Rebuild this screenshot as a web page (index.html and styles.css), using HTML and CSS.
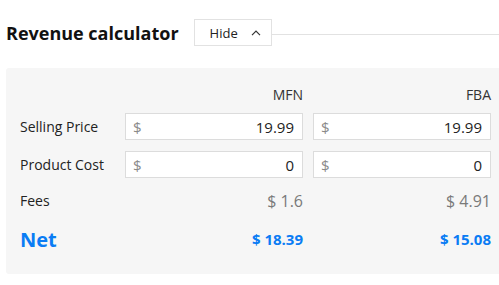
FILE: index.html
```html
<!DOCTYPE html>
<html lang="en">
<head>
    <meta charset="UTF-8">
    <meta name="viewport" content="width=device-width, initial-scale=1.0">
    <title>Revenue calculator</title>
    <link rel="stylesheet" href="styles.css">
</head>
<body>
    <div class="calc-header">
        <h2 class="calc-title">Revenue calculator</h2>
        <button class="toggle-btn">
            <span>Hide</span>
            <svg width="10" height="6" viewBox="0 0 10 6"><path d="M1 5.2 L5 1.2 L9 5.2" fill="none" stroke="#333" stroke-width="1.2"/></svg>
        </button>
        <div class="header-line"></div>
    </div>

    <div class="calc-panel">
        <div class="calc-row head-row">
            <div></div>
            <div class="col-head">MFN</div>
            <div class="col-head">FBA</div>
        </div>
        <div class="calc-row input-row">
            <div class="row-label">Selling Price</div>
            <div class="money-input"><span class="cur">$</span><span class="val">19.99</span></div>
            <div class="money-input"><span class="cur">$</span><span class="val">19.99</span></div>
        </div>
        <div class="calc-row input-row second">
            <div class="row-label">Product Cost</div>
            <div class="money-input"><span class="cur">$</span><span class="val">0</span></div>
            <div class="money-input"><span class="cur">$</span><span class="val">0</span></div>
        </div>
        <div class="calc-row fees-row">
            <div class="row-label">Fees</div>
            <div class="fee">$ 1.6</div>
            <div class="fee">$ 4.91</div>
        </div>
        <div class="calc-row net-row">
            <div class="net-label">Net</div>
            <div class="net">$ 18.39</div>
            <div class="net">$ 15.08</div>
        </div>
    </div>
</body>
</html>
```

FILE: styles.css
```css
body {
    margin: 0;
    overflow: hidden;
    font-family: "Open Sans", Arial, sans-serif;
    color: #222;
    background: white;
}

.calc-header {
    display: flex;
    align-items: center;
    padding: 19px 0 0 6px;
    height: 27px;
}

.calc-title {
    margin: 0;
    font-size: 18px;
    font-weight: 700;
    color: #111;
}

.toggle-btn {
    display: flex;
    align-items: center;
    gap: 13px;
    width: 78px;
    height: 27px;
    margin-left: 15px;
    padding: 0 0 0 15px;
    background: white;
    border: 1px solid #e2e2e2;
    font-family: "Open Sans", Arial, sans-serif;
    font-size: 13px;
    color: #222;
    cursor: pointer;
}

.header-line {
    flex: 1;
    border-top: 1px solid #e2e2e2;
    margin-top: 3px;
}

.calc-panel {
    margin: 22px -8px 0 6px;
    padding: 16px 22px 21px 14px;
    background: #f6f6f6;
    border-radius: 3px;
}

.calc-row {
    display: grid;
    grid-template-columns: 95px 178px 178px;
    column-gap: 10px;
    align-items: center;
}

.head-row {
    height: 20px;
}

.col-head {
    text-align: right;
    font-size: 14px;
    color: #333;
}

.row-label {
    font-size: 14px;
    color: #222;
}

.input-row {
    height: 27px;
    margin-top: 9px;
}

.input-row.second {
    margin-top: 11px;
}

.money-input {
    display: flex;
    justify-content: space-between;
    align-items: center;
    height: 27px;
    box-sizing: border-box;
    padding: 0 8px 0 7px;
    background: white;
    border: 1px solid #dcdcdc;
    font-size: 15px;
}

.money-input .cur {
    color: #8a8a8a;
}

.money-input .val {
    color: #222;
}

.fees-row {
    height: 27px;
    margin-top: 9px;
}

.fee {
    text-align: right;
    font-size: 16px;
    color: #7a7a7a;
}

.net-row {
    height: 28px;
    margin-top: 11px;
}

.net-label {
    font-size: 20px;
    font-weight: 700;
    color: #0a7cf4;
}

.net {
    text-align: right;
    font-size: 15px;
    font-weight: 700;
    color: #0a7cf4;
}
```
